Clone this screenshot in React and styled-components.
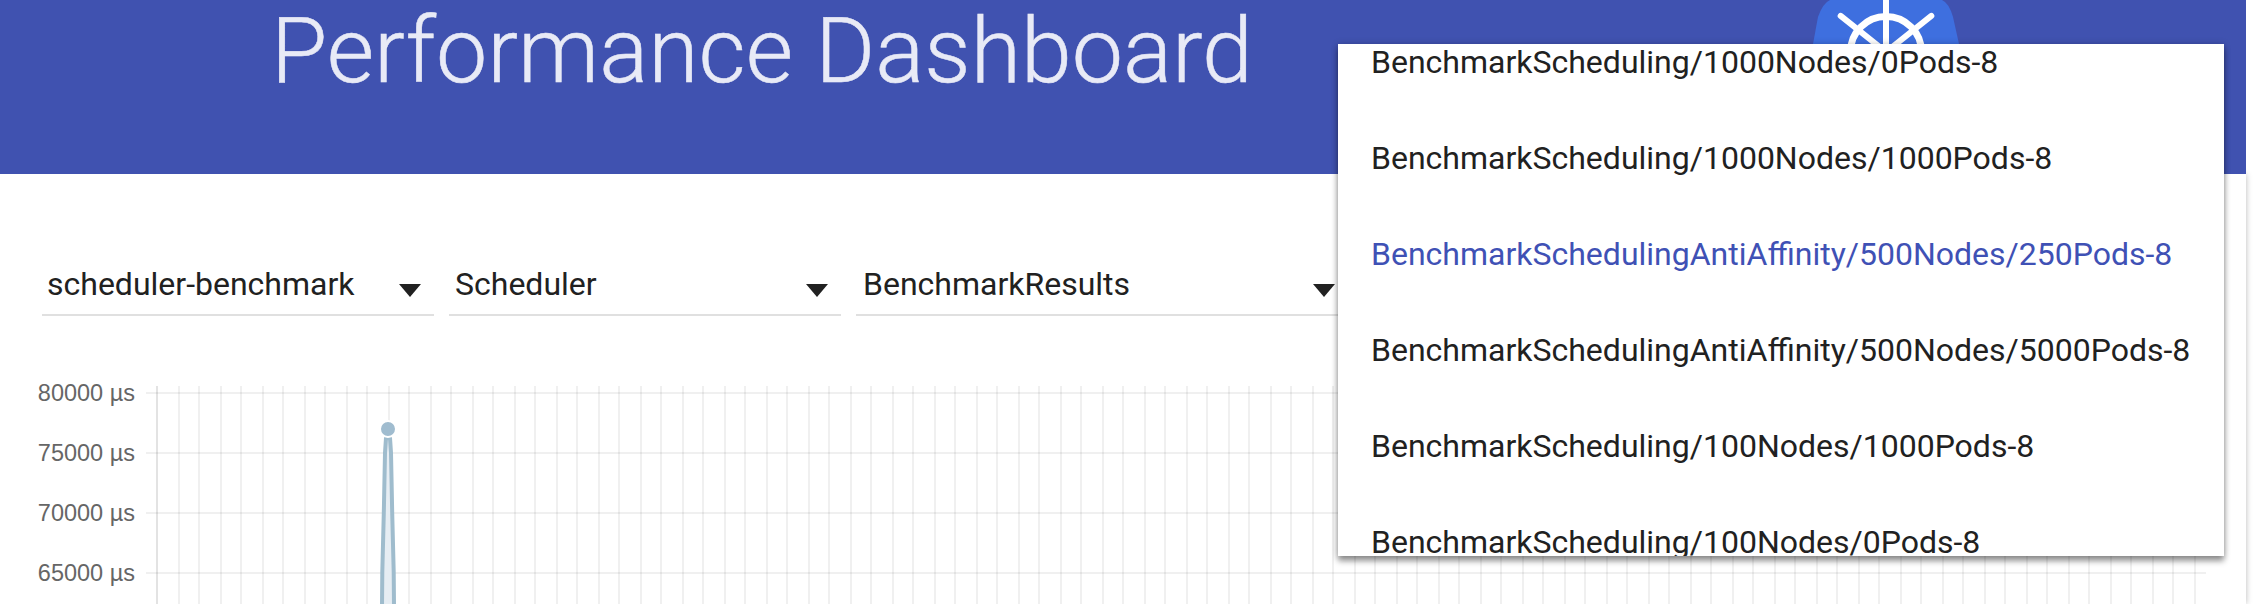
import styled, { createGlobalStyle } from "styled-components";

const GlobalStyle = createGlobalStyle`
	html, body {
		margin: 0;
		height: 604px;
		overflow: hidden;
		background: #fff;
		font-family: Roboto, "Liberation Sans", sans-serif;
	}
`;

const Page = styled.div`
	position: relative;
	width: 2246px;
	height: 604px;
`;

const Header = styled.header`
	position: relative;
	z-index: 1;
	display: flex;
	align-items: flex-start;
	height: 174px;
	padding-left: 271px;
	box-sizing: border-box;
	background: #4052b0;
`;

const Title = styled.h1`
	margin: 0;
	padding-top: 3px;
	width: 1535px;
	font-size: 91.5px;
	font-weight: 300;
	line-height: 96px;
	color: #e8eaf6;
	-webkit-text-stroke: 0.5px #e8eaf6;
	white-space: nowrap;
`;

const Content = styled.main`
	height: 430px;
	background: #fff;
	box-shadow: 0 0 6px rgba(0, 0, 0, 0.28);
	overflow: hidden;
`;

const Toolbar = styled.div`
	display: flex;
	gap: 15px;
	padding: 78px 0 0 42px;
`;

const Select = styled.div`
	display: flex;
	align-items: center;
	justify-content: space-between;
	box-sizing: border-box;
	width: ${(p) => p.$width}px;
	height: 64px;
	padding: 2px 13px 0 ${(p) => p.$inset}px;
	border-bottom: 2px solid #e0e0e0;
	font-size: 32px;
	color: #212121;
`;

const Arrow = styled.svg`
	width: 22px;
	height: 13px;
	margin-top: 13px;
	fill: #212121;
`;

const Chart = styled.svg`
	display: block;
	margin-top: 60px;
	width: 2246px;
	height: 228px;
`;

const AxisLabel = styled.text`
	font-family: "Liberation Sans", Arial, sans-serif;
	font-size: 23.5px;
	fill: #666;
`;

const Menu = styled.div`
	position: absolute;
	z-index: 2;
	top: 44px;
	left: 1338px;
	width: 886px;
	height: 512px;
	background: #fff;
	overflow: hidden;
	box-shadow: 0 5px 6px rgba(0, 0, 0, 0.4), 0 0 7px rgba(0, 0, 0, 0.2);
`;

const MenuList = styled.ul`
	list-style: none;
	margin: -30px 0 0;
	padding: 0;
`;

const MenuItem = styled.li`
	display: flex;
	align-items: center;
	height: 96px;
	padding-left: 33px;
	font-size: 32px;
	white-space: nowrap;
	color: ${(p) => (p.$selected ? "#3f51b5" : "#212121")};
`;

const LogoMark = styled.svg`
	flex: none;
	width: 160px;
	height: 174px;
`;

const selects = [
	{ label: "scheduler-benchmark", width: 392, inset: 5 },
	{ label: "Scheduler", width: 392, inset: 6 },
	{ label: "BenchmarkResults", width: 492, inset: 7 },
];

const options = [
	"BenchmarkScheduling/1000Nodes/0Pods-8",
	"BenchmarkScheduling/1000Nodes/1000Pods-8",
	"BenchmarkSchedulingAntiAffinity/500Nodes/250Pods-8",
	"BenchmarkSchedulingAntiAffinity/500Nodes/5000Pods-8",
	"BenchmarkScheduling/100Nodes/1000Pods-8",
	"BenchmarkScheduling/100Nodes/0Pods-8",
];

// chart svg starts at y=376, so the rows below are relative to that
const yTicks = [
	{ label: "80000 µs", y: 17 },
	{ label: "75000 µs", y: 77 },
	{ label: "70000 µs", y: 137 },
	{ label: "65000 µs", y: 197 },
];

const xGrid = [];
for (let x = 157; x <= 2195; x += 42) {
	xGrid.push(x);
	if (x + 22 <= 2195) xGrid.push(x + 22);
}

const Logo = () => {
	const cx = 80;
	const cy = 52;
	const spokes = [0, 51.4, -51.4, 102.8, -102.8, 154.3, -154.3];
	return (
		<LogoMark viewBox="0 0 160 174">
			<path
				d="M24 0 Q17 3 12 17 L7 44 L3 66 Q2 74 9 80 L68 130 Q80 138 92 130 L151 80 Q158 74 157 66 L153 44 L147 17 Q143 3 136 0 Z"
				fill="#3e6fdf"
			/>
			<circle cx={cx} cy={cy} r="35.5" fill="none" stroke="#fff" strokeWidth="7" />
			<circle cx={cx} cy={cy} r="8" fill="#fff" />
			{spokes.map((a) => (
				<line
					key={a}
					x1={cx}
					y1={cy}
					x2={cx}
					y2={cy - 58}
					stroke="#fff"
					strokeWidth="6"
					strokeLinecap="round"
					transform={`rotate(${a} ${cx} ${cy})`}
				/>
			))}
		</LogoMark>
	);
};

export default function App() {
	return (
		<Page>
			<GlobalStyle />
			<Header>
				<Title>Performance Dashboard</Title>
				<Logo />
			</Header>
			<Content>
				<Toolbar>
					{selects.map((s) => (
						<Select key={s.label} $width={s.width} $inset={s.inset}>
							{s.label}
							<Arrow viewBox="0 0 22 13">
								<polygon points="0,0 22,0 11,13" />
							</Arrow>
						</Select>
					))}
				</Toolbar>
				<Chart viewBox="0 0 2246 228">
					{xGrid.map((x) => (
						<line
							key={x}
							x1={x}
							y1="10"
							x2={x}
							y2="228"
							stroke={x === 157 ? "rgba(0,0,0,0.11)" : "rgba(0,0,0,0.06)"}
							strokeWidth="2"
						/>
					))}
					{yTicks.map((t) => (
						<g key={t.label}>
							<line x1="146" y1={t.y} x2="2206" y2={t.y} stroke="rgba(0,0,0,0.06)" strokeWidth="2" />
							<AxisLabel x="135" y={t.y + 8} textAnchor="end">
								{t.label}
							</AxisLabel>
						</g>
					))}
					<path
						d="M382 230 L382.3 196 L383.8 137 L385 77 L386 62 L390 62 L391 77 L392.2 137 L393.7 196 L394 230 Z"
						fill="#e6edf3"
						stroke="#9fbccd"
						strokeWidth="4"
						strokeLinejoin="round"
					/>
					<circle cx="388" cy="53" r="8" fill="#a0bccf" stroke="#fff" strokeWidth="2" />
				</Chart>
			</Content>
			<Menu>
				<MenuList>
					{options.map((o, i) => (
						<MenuItem key={o} $selected={i === 2}>
							{o}
						</MenuItem>
					))}
				</MenuList>
			</Menu>
		</Page>
	);
}
